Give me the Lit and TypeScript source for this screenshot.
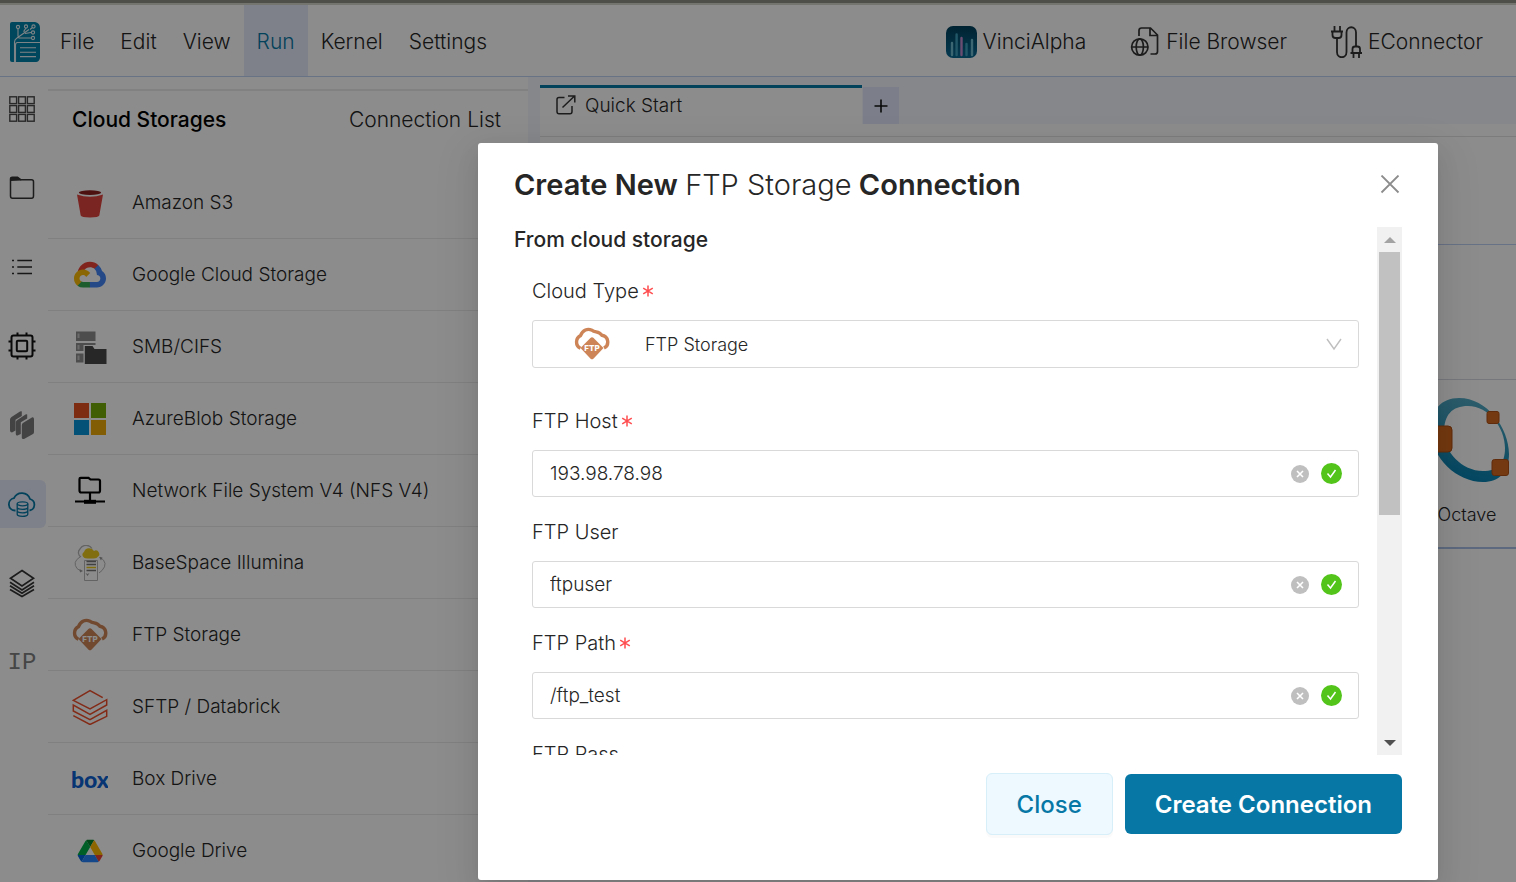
import { LitElement, html, svg, css, nothing, TemplateResult } from "lit";
import { customElement, state } from "lit/decorators.js";
import { classMap } from "lit/directives/class-map.js";

const ftpIcon = html`<svg width="36" height="36" viewBox="0 0 36 36" aria-hidden="true">
  <path d="M6.500 22.200A7 7 0 0 1 6.500 9.600C8.800 3.800 13.500 2.300 18 4.200C21 6.800 25 4.800 27.800 9.200A6.800 6.800 0 0 1 30 22" fill="none" stroke="#cd8557" stroke-width="3.400"/>
  <path d="M16.400 12Q18 10.400 19.600 12L29.500 22 19.400 32.700Q18 34 16.600 32.700L6.500 22Z" fill="#cd8557"/>
  <text x="18" y="25" text-anchor="middle" font-family="Inter, sans-serif" font-size="8" font-weight="800" fill="#fff">FTP</text>
</svg>`;

const icons: Record<string, TemplateResult> = {
  grid: html`<svg width="30" height="30" viewBox="0 0 30 30"><g fill="none" stroke="#4a4a4a" stroke-width="1.400">
    ${[2.800, 11.600, 20.400].map((y) => [2.800, 11.600, 20.400].map((x) => svg`<rect x=${x} y=${y} width="6.800" height="6.800"/>`))}</g></svg>`,
  folder: html`<svg width="30" height="30" viewBox="0 0 30 30"><path d="M3.500 7V6Q3.500 4.200 5.300 4.200H10.500L14 6.800H24.500Q26.500 6.800 26.500 8.800V23Q26.500 25.300 24.500 25.300H5.500Q3.500 25.300 3.500 23Z" fill="none" stroke="#333" stroke-width="1.500"/><path d="M3.500 8V4.200H11L14.500 7.500Z" fill="#333"/></svg>`,
  list: html`<svg width="30" height="30" viewBox="0 0 30 30"><path d="M5 8.500h2M5 15h2M5 21.500h2M10.300 8.500H25M10.300 15H25M10.300 21.500H25" stroke="#2a2a2a" stroke-width="1.600"/></svg>`,
  cpu: html`<svg width="30" height="30" viewBox="0 0 30 30"><g fill="none" stroke="#111" stroke-width="2"><rect x="4.500" y="4.500" width="21" height="21" rx="2"/><rect x="9.800" y="9.800" width="10.400" height="10.400" rx="1"/><path d="M10.500 4V1.500M19.500 4V1.500M10.500 28.500V26M19.500 28.500V26M4 10.500H1.500M4 19.500H1.500M28.500 10.500H26M28.500 19.500H26"/></g></svg>`,
  stack: html`<svg width="30" height="30" viewBox="0 0 30 30"><g fill="#7d7a7c"><path d="M14.800 1.500V6L8.500 9.800V20.500L5 22.500Q3 22.500 3 20.500V9.500Q3 8 4.500 7L13 1.500Q14.500 1 14.800 1.500Z"/><path d="M20.200 4.500V8.500L13.800 12.300V24L10.500 25.500Q8.800 25.700 8.800 24V12.500Q8.800 11 10 10.300L18.500 4.500Q20 4 20.200 4.500Z"/><path d="M16.300 12.800L25.300 7.300Q27 7 27 9V22Q27 23.300 26 24L17 29Q14.800 29.500 14.800 27.500V15.300Q14.800 13.700 16.300 12.800Z"/></g></svg>`,
  cloud: html`<svg width="30" height="30" viewBox="0 0 30 30"><g fill="none" stroke="#0778a6" stroke-width="1.800"><path d="M8.500 21.500H8A6.200 6.200 0 0 1 7 9.200A8.600 8.600 0 0 1 23 10A5.900 5.900 0 0 1 22.500 21.500"/><g stroke-width="1.300"><ellipse cx="15.500" cy="14.800" rx="5.300" ry="2"/><path d="M10.200 14.800V25.300C10.200 28 20.800 28 20.800 25.300V14.800M10.200 18.300C10.200 21 20.800 21 20.800 18.300M10.200 21.800C10.200 24.500 20.800 24.500 20.800 21.800"/></g></g></svg>`,
  layers: html`<svg width="30" height="30" viewBox="0 0 30 30"><g fill="none" stroke="#333" stroke-width="1.700"><path d="M15 2.500L26.500 10.300 15 18 3.500 10.300Z"/><path d="M3 14.300L15 22 27 14.300M3 17.800L15 25.300 27 17.800M3 21.500L15 28.600 27 21.500"/></g></svg>`,
  s3: html`<svg width="36" height="36" viewBox="0 0 36 36"><ellipse cx="18" cy="7.600" rx="11.200" ry="2.300" fill="#8c1f1c"/><path d="M5 9.600Q18 14 31 9.600L27.300 30.500Q26.800 32.400 18 32.500 9.200 32.400 8.700 30.500Z" fill="#e0443e"/></svg>`,
  gcs: html`<svg width="36" height="36" viewBox="-16 -38 288 288"><path d="M170.252 56.819l22.253-22.253 1.483-9.370C153.437-11.677 88.976-7.496 52.420 33.920 42.267 45.423 34.734 59.764 30.717 74.573l7.970-1.123 44.505-7.340 3.436-3.513c19.797-21.742 53.270-24.667 76.128-6.168l7.496.390z" fill="#EA4335"/><path d="M224.205 73.918a100.249 100.249 0 0 0-30.217-48.722l-31.232 31.232a55.515 55.515 0 0 1 20.379 44.037v5.544c15.350 0 27.797 12.445 27.797 27.796 0 15.352-12.446 27.485-27.797 27.485h-55.671l-5.466 5.934v33.340l5.466 5.231h55.670c39.930.311 72.553-31.494 72.864-71.424a72.303 72.303 0 0 0-31.793-60.453" fill="#4285F4"/><path d="M71.870 205.796h55.593V161.290H71.870a27.275 27.275 0 0 1-11.400-2.498l-7.887 2.420-22.409 22.253-1.952 7.574a72.130 72.130 0 0 0 43.648 14.757" fill="#34A853"/><path d="M71.870 61.425C31.940 61.664-.237 94.228.002 134.158a72.301 72.301 0 0 0 28.222 56.881l32.248-32.246c-13.990-6.322-20.208-22.786-13.887-36.776 6.322-13.990 22.786-20.208 36.775-13.888a27.796 27.796 0 0 1 13.887 13.888l32.248-32.248A72.224 72.224 0 0 0 71.870 61.425" fill="#FBBC05"/></svg>`,
  smb: html`<svg width="36" height="36" viewBox="0 0 36 36"><g fill="#8c8c8c"><path d="M4 2.500H23.500V12H4ZM4 14H23.500V16H11.500V22H4ZM4 24.500H11.500V33.500H4Z"/></g><g fill="#c4c4c4"><path d="M5.500 4.500H7.500V9H5.500ZM5.500 16H7.500V20.500H5.500ZM5.500 26.500H7.500V31H5.500Z"/></g><path d="M12.800 17H20.500L22.500 20H34.500V35H12.800Z" fill="#484848"/></svg>`,
  azure: html`<svg width="36" height="36" viewBox="0 0 36 36"><path fill="#e35022" d="M2 2H17V17H2Z"/><path fill="#76ae08" d="M19 2H34V17H19Z"/><path fill="#0694d8" d="M2 19H17V34H2Z"/><path fill="#efa907" d="M19 19H34V34H19Z"/></svg>`,
  nfs: html`<svg width="36" height="36" viewBox="0 0 36 36"><g fill="none" stroke="#000" stroke-width="2.200"><path d="M7.500 6Q7.500 4.800 8.700 4.800H16.500L18.500 6.500H26.500Q28 6.500 28 8V17.500Q28 19.500 26.500 19.500H9.300Q7.500 19.500 7.500 17.500ZM18 20V28M3 28.500H33"/></g><path d="M12 26.800H24V30.800H12Z"/></svg>`,
  illumina: html`<svg width="36" height="36" viewBox="0 0 36 36"><g fill="none" stroke="#b4b4b4"><path d="M9 12A5 5 0 0 1 8 4A7 7 0 0 1 20 3.500" stroke-width="1.300"/><path d="M12.500 15.500H25.500V35.500H12.500ZM8 12Q0 17 5 23.500L8 25.500M28 12Q37 18 30 25.500L27 28" /></g><path d="M11.500 12A3 3 0 0 1 12 7A5.500 5.500 0 0 1 22 6A3.200 3.200 0 0 1 25.500 12Q25 13.500 18.500 13.500T11.500 12Z" fill="#ecc91a"/><path d="M14.500 16.500H24M14.500 19.500H24M14.500 25.500H24" stroke="#777" stroke-width="1.500"/><path d="M14.500 22.500H24" stroke="#ecc91a" stroke-width="1.500"/><path d="M7.500 24L11 26 8 27.500ZM27 12L30.500 12.500 29 15.500ZM13.500 28L15.500 31 17.500 28 15.500 29Z" fill="#999"/></svg>`,
  ftp: ftpIcon,
  sftp: html`<svg width="36" height="36" viewBox="0 0 36 36"><path d="M30.700 8.700L18 1.700 1.300 11.300 18 20 34.700 10.700V16L18 25.300 1.300 16V22L18 30.700 34.700 21.300V27.300L18 35.500 1.300 26.700" fill="none" stroke="#ee4f2b" stroke-width="1.500"/></svg>`,
  box: html`<svg width="36" height="36" viewBox="0 0 36 36"><text x="18" y="27" text-anchor="middle" font-family="Lato, sans-serif" font-size="23" font-weight="900" fill="#0d61d2">box</text></svg>`,
  drive: html`<svg width="36" height="36" viewBox="-20 -24 126 126"><path d="m6.600 66.850 3.850 6.650c.8 1.400 1.950 2.500 3.300 3.300l13.750-23.800h-27.500c0 1.550.4 3.100 1.200 4.500z" fill="#0066da"/><path d="m43.650 25-13.750-23.800c-1.350.8-2.500 1.900-3.300 3.300l-25.400 44a9.060 9.060 0 0 0 -1.200 4.500h27.500z" fill="#00ac47"/><path d="m73.550 76.800c1.350-.8 2.500-1.900 3.300-3.300l1.600-2.750 7.650-13.250c.8-1.400 1.200-2.950 1.200-4.500h-27.502l5.852 11.500z" fill="#ea4335"/><path d="m43.650 25 13.750-23.800c-1.350-.8-2.900-1.200-4.500-1.200h-18.500c-1.600 0-3.150.45-4.500 1.200z" fill="#00832d"/><path d="m59.800 53h-32.300l-13.750 23.800c1.350.8 2.900 1.200 4.500 1.200h50.800c1.600 0 3.150-.45 4.500-1.200z" fill="#2684fc"/><path d="m73.400 26.500-12.700-22c-.8-1.400-1.950-2.500-3.300-3.300l-13.750 23.800 16.150 28h27.450c0-1.550-.4-3.100-1.200-4.500z" fill="#ffba00"/></svg>`,
  vinci: html`<svg width="31" height="32" viewBox="0 0 31 32"><defs><linearGradient id="va" x1="0" y1="0" x2="0" y2="1"><stop offset="0" stop-color="#00405a"/><stop offset="1" stop-color="#0a6a94"/></linearGradient></defs><rect width="31" height="32" rx="7" fill="url(#va)"/><g stroke-width="2.400" stroke-linecap="round"><path d="M6 17V29M26 14V29" stroke="#6dbcd0"/><path d="M10.600 8.500V29M20.500 18V29" stroke="#3f9fbc"/><path d="M15.500 12V29" stroke="#c48cd0"/></g></svg>`,
  browser: html`<svg width="30" height="32" viewBox="0 0 30 32"><g fill="none" stroke="#333" stroke-width="1.700"><circle cx="9.800" cy="21" r="8.200"/><ellipse cx="9.800" cy="21" rx="3.600" ry="8.200"/><path d="M1.600 21H18M9 10V4.500Q9 2 11.500 2H20.500L27.500 9V25.500Q27.500 28 25 28H20.500M20 2V9.500H27.500"/></g></svg>`,
  plug: html`<svg width="31" height="32" viewBox="0 0 31 32"><g fill="none" stroke="#333" stroke-width="1.800"><path d="M3.500 0V5M9 0V5M0 5.500H12M1.500 5.500V9Q1.500 12 4.500 12H7.500Q10.500 12 10.500 9V5.500M6 12V26C6 33 15.500 33 15.500 26V6.500C15.500 -.5 25 -.5 25 6.500V20M21.500 27V23Q21.500 20.500 24 20.500H26.500Q29 20.500 29 23V27M19.500 27H31M22.500 27V32M28 27V32"/></g></svg>`,
  octave: html`<svg width="84" height="84" viewBox="0 0 84 84"><defs><linearGradient id="oc" x1=".6" y1="0" x2=".4" y2="1"><stop offset="0" stop-color="#54abc4"/><stop offset="1" stop-color="#0580b0"/></linearGradient></defs>
    <path fill="url(#oc)" fill-rule="evenodd" d="M34 0C62 0 84 30 84 56C84 74 74 84 58 84C32 84 6 60 6 32C6 12 16 0 34 0ZM43 8C27 8 19 17 19 34C19 54 37 73 58 73C73 73 80 66 80 50C80 30 64 8 43 8Z"/>
    <g fill="#d4691e" stroke="#b04f14"><rect x="1" y="28" width="26" height="26" rx="4"/><rect x="62" y="13.500" width="12" height="12" rx="2"/><rect x="67" y="61.500" width="16.500" height="16" rx="2.500"/></g></svg>`,
};

const storages: [string, string][] = [
  ["s3", "Amazon S3"],
  ["gcs", "Google Cloud Storage"],
  ["smb", "SMB/CIFS"],
  ["azure", "AzureBlob Storage"],
  ["nfs", "Network File System V4 (NFS V4)"],
  ["illumina", "BaseSpace Illumina"],
  ["ftp", "FTP Storage"],
  ["sftp", "SFTP / Databrick"],
  ["box", "Box Drive"],
  ["drive", "Google Drive"],
];

const fields = [
  { id: "host", label: "FTP Host", value: "193.98.78.98", required: true },
  { id: "user", label: "FTP User", value: "ftpuser", required: false },
  { id: "path", label: "FTP Path", value: "/ftp_test", required: true },
  { id: "pass", label: "FTP Pass", value: "", required: false },
];

const base = css`
  * { box-sizing: border-box; }
  button, input, select { font: inherit; color: inherit; margin: 0; padding: 0; border: 0; background: none; }
  a { color: inherit; text-decoration: none; }
  svg { display: block; flex: none; }
  h1, h2, h3, ul { margin: 0; padding: 0; font-size: inherit; }
`;

@customElement("connection-dialog")
export class ConnectionDialog extends LitElement {
  static styles = [base, css`
    :host { display: block; width: 100%; max-width: 960px; background: #fff; border-radius: 3px; padding: 21px 36px 45px; color: #262626;
      box-shadow: 0 4px 9px -6px rgba(0,0,0,.12), 0 9px 24px rgba(0,0,0,.08), 0 14px 42px 12px rgba(0,0,0,.05); }
    .head { display: flex; justify-content: space-between; align-items: center; padding-bottom: 21px; }
    .title { font-size: 29px; line-height: 42px; font-weight: 600; }
    .kind { font-weight: 300; }
    .dismiss { width: 24px; height: 24px; display: grid; place-items: center; }
    .body { display: flex; height: calc(100vh - 354px); }
    .form { flex: 1; overflow: hidden; }
    .section { font-size: 21px; line-height: 26px; font-weight: 500; }
    .fields { display: flex; flex-direction: column; gap: 19px; padding: 22px 18px 0; }
    .field { display: flex; flex-direction: column; gap: 13px; }
    .type { padding-bottom: 18px; }
    .label { display: flex; align-items: center; gap: 3px; font-size: 20px; line-height: 32px; font-weight: 300; }
    .box { display: flex; align-items: center; gap: 12px; height: 47px; border: 1px solid #d9d9d9; border-radius: 3px; padding: 0 16px; font-size: 19px; font-weight: 300; }
    .box.choice { height: 48px; padding-left: 41px; gap: 34px; font-size: 18px; }
    .box input, .box select { flex: 1; min-width: 0; height: 100%; appearance: none; outline: none; padding: 0 1px; }
    .bar { width: 25px; background: #f1f1f1; display: flex; flex-direction: column; align-items: center; }
    .arrow { height: 25px; display: grid; place-items: center; }
    .track { flex: 1; width: 21px; }
    .thumb { height: 55%; background: #c1c1c1; }
    .foot { display: flex; justify-content: flex-end; align-items: center; gap: 12px; padding-top: 18px; font-size: 24px; font-weight: 500; line-height: 36px; }
    .close { padding: 13px 30px 11px; border: 1px solid #d6eff9; border-radius: 6px; background: #edf8ff; color: #0778a6; box-shadow: 0 3px 0 rgba(0,0,0,.02); }
    .create { padding: 13px 30px 11px; border-radius: 6px; background: #0778a6; color: #fff; font-weight: 600; }
  `];

  star = html`<svg width="12" height="12" viewBox="0 0 12 12" aria-hidden="true"><path d="M6 .5V11.500M1.200 3.200L10.800 8.800M10.800 3.200L1.200 8.800" stroke="#ff4d4f" stroke-width="1.500"/></svg>`;

  render() {
    return html`
      <div class="head">
        <h2 class="title">Create New <span class="kind">FTP Storage</span> Connection</h2>
        <button class="dismiss" aria-label="Dismiss"><svg width="20" height="20" viewBox="0 0 20 20"><path d="M1.500 .5L18.500 17.500M18.500 .5L1.500 17.500" stroke="#8c8c8c" stroke-width="1.800"/></svg></button>
      </div>
      <div class="body">
        <div class="form">
          <h3 class="section">From cloud storage</h3>
          <div class="fields">
            <div class="field type">
              <label class="label" for="type">Cloud Type${this.star}</label>
              <div class="box choice">
                ${ftpIcon}
                <select id="type"><option>FTP Storage</option></select>
                <svg width="16" height="14" viewBox="0 0 16 14"><path d="M1 2L8 12 15 2" fill="none" stroke="#bfbfbf" stroke-width="1.400"/></svg>
              </div>
            </div>
            ${fields.map((f) => html`
              <div class="field">
                <label class="label" for=${f.id}>${f.label}${f.required ? this.star : nothing}</label>
                <div class="box">
                  <input id=${f.id} .value=${f.value} />
                  <button aria-label="Clear"><svg width="18" height="18" viewBox="0 0 18 18"><circle cx="9" cy="9" r="9" fill="#bfbfbf"/><path d="M6 6L12 12M12 6L6 12" stroke="#fff" stroke-width="1.600"/></svg></button>
                  <svg width="21" height="21" viewBox="0 0 21 21"><circle cx="10.500" cy="10.500" r="10.500" fill="#52c41a"/><path d="M6.500 10.500L9.500 14 14.500 7" fill="none" stroke="#fff" stroke-width="1.500"/></svg>
                </div>
              </div>`)}
          </div>
        </div>
        <div class="bar" aria-hidden="true">
          <div class="arrow"><svg width="12" height="6" viewBox="0 0 12 6"><path d="M0 6L6 0 12 6Z" fill="#a3a3a3"/></svg></div>
          <div class="track"><div class="thumb"></div></div>
          <div class="arrow"><svg width="12" height="6" viewBox="0 0 12 6"><path d="M0 0L6 6 12 0Z" fill="#505050"/></svg></div>
        </div>
      </div>
      <div class="foot">
        <button class="close">Close</button>
        <button class="create">Create Connection</button>
      </div>`;
  }
}

@customElement("app-root")
export class AppRoot extends LitElement {
  @state() activeMenu = "Run";
  @state() activeRail = "cloud";

  static styles = [base, css`
    :host { display: block; position: relative; height: 100vh; overflow: hidden; background: #fff; color: #262626;
      font-family: Inter, "Open Sans", sans-serif; font-size: 21px; font-weight: 300; }
    .page { display: flex; flex-direction: column; height: 100%; border-top: 3px solid #8f9186; }
    .top { display: flex; align-items: center; height: 74px; flex: none; border-top: 2px solid #d5d5cd; border-bottom: 1px solid #bdd2f2; }
    .logo { margin: 2px 7px 0 10px; }
    .menu { display: flex; height: 100%; }
    .item { padding: 2px 13px 0; height: 100%; }
    .item.on { background: #e5ebfb; color: #0778a6; }
    .links { display: flex; gap: 44px; margin-left: auto; padding: 2px 33px 0 0; }
    .link { display: flex; align-items: center; gap: 6px; }
    .work { display: flex; flex: 1; min-height: 0; }
    .rail { width: 48px; padding-right: 2px; display: flex; flex-direction: column; gap: 31px; padding-top: 8px; flex: none; }
    .tool { height: 48px; display: grid; place-items: center; padding-right: 2px; border-radius: 0 6px 6px 0; }
    .tool.on { background: #e5ebfb; }
    .ip { font-family: "Liberation Mono", monospace; font-size: 24px; font-weight: 400; color: #808080; }
    .panel { width: 480px; flex: none; padding-top: 12px; }
    .panelhead { display: flex; justify-content: space-between; align-items: center; height: 78px; padding: 0 27px 20px 24px; border-top: 2px solid #ececec; }
    .strong { font-weight: 500; color: #000; }
    .row { display: flex; align-items: center; gap: 24px; height: 72px; padding-left: 24px; border-bottom: 1px solid #eaeaea; font-size: 19px; }
    .main { flex: 1; min-width: 0; padding-left: 12px; background: #f4f6fb; }
    .tabs { display: flex; align-items: flex-end; gap: 1px; height: 47px; font-size: 19px; }
    .tab { display: flex; align-items: center; gap: 9px; width: 322px; height: 39px; padding: 0 16px 2px; border-top: 3px solid #0778a6; background: #fff; }
    .add { width: 36px; height: 37px; display: grid; place-items: center; background: #e2e8fa; }
    .canvas { height: 100%; padding-top: 12px; background: #fff; }
    .band { height: 109px; border-top: 1px solid #e2e2e2; border-bottom: 1px solid #bdd0f5; }
    .cards { display: flex; justify-content: flex-end; padding-top: 134px; }
    .card { display: flex; flex-direction: column; align-items: center; gap: 21px; width: 98px; padding: 18px 0 20px; border-top: 1px solid #d8d8e4; border-bottom: 2px solid #a9c0e6; font-size: 18px; line-height: 24px; }
    .mask { position: absolute; inset: 0; background: rgba(0,0,0,.45); display: flex; justify-content: flex-end; align-items: flex-start; padding: 143px 78px 0; }
  `];

  render() {
    const menus = ["File", "Edit", "View", "Run", "Kernel", "Settings"];
    const rail = ["grid", "folder", "list", "cpu", "stack", "cloud", "layers", "ip"];
    return html`
      <div class="page">
        <header class="top">
          <svg class="logo" width="30" height="40" viewBox="0 0 30 40"><path d="M2 0H25Q30 1 30 6V36Q29 40 26 40H2Q0 40 0 38V2Q0 0 2 0Z" fill="#0080a8"/>
            <g fill="none" stroke="#e6f0f4" stroke-width="1.100"><path d="M4.500 40V20Q4.500 17.500 7 16L19 7.500M30 20.500H7.500Q5.500 20.500 5.500 23V40M8 14.500V7M14 10V9L16 6M20 7.500L22.500 5.500M15 11.500L21 10.500M8.500 16H21M10 25.800H26M10 30.200H26M10 34.600H26"/><circle cx="8" cy="5" r="1.600"/><circle cx="16" cy="4.500" r="1.600"/><circle cx="23.500" cy="4.500" r="1.600"/><circle cx="23" cy="10.500" r="1.600"/><circle cx="23" cy="16" r="1.600"/></g></svg>
          <nav class="menu">${menus.map((m) => html`<button class=${classMap({ item: true, on: m === this.activeMenu })} @click=${() => (this.activeMenu = m)}>${m}</button>`)}</nav>
          <nav class="links">
            <a class="link" href="#vinci">${icons.vinci}VinciAlpha</a>
            <a class="link" href="#files">${icons.browser}File Browser</a>
            <a class="link" href="#econnector">${icons.plug}EConnector</a>
          </nav>
        </header>
        <div class="work">
          <nav class="rail">${rail.map((r) => html`<button class=${classMap({ tool: true, on: r === this.activeRail })} aria-label=${r} @click=${() => (this.activeRail = r)}>${r === "ip" ? html`<span class="ip">IP</span>` : icons[r]}</button>`)}</nav>
          <section class="panel">
            <div class="panelhead"><h2 class="strong">Cloud Storages</h2><a href="#connections">Connection List</a></div>
            ${storages.map(([icon, name]) => html`<a class="row" href="#${icon}">${icons[icon]}<span>${name}</span></a>`)}
          </section>
          <main class="main">
            <div class="tabs">
              <div class="tab"><svg width="20" height="20" viewBox="0 0 20 20"><path d="M8.500 2.500H3Q1 2.500 1 4.500V16.500Q1 18.800 3 18.800H14Q16 18.800 16 16.500V11M6.500 12.500L18.300 1.200M12 1H18.800V7.500" fill="none" stroke="#333" stroke-width="1.500"/></svg>Quick Start</div>
              <button class="add" aria-label="New tab"><svg width="14" height="14" viewBox="0 0 14 14"><path d="M7 .5V13.500M.5 7H13.500" stroke="#111" stroke-width="1.600"/></svg></button>
            </div>
            <div class="canvas">
              <div class="band"></div>
              <div class="cards"><div class="card">${icons.octave}<span>Octave</span></div></div>
            </div>
          </main>
        </div>
      </div>
      <div class="mask"><connection-dialog role="dialog" aria-label="Create New FTP Storage Connection"></connection-dialog></div>`;
  }
}
